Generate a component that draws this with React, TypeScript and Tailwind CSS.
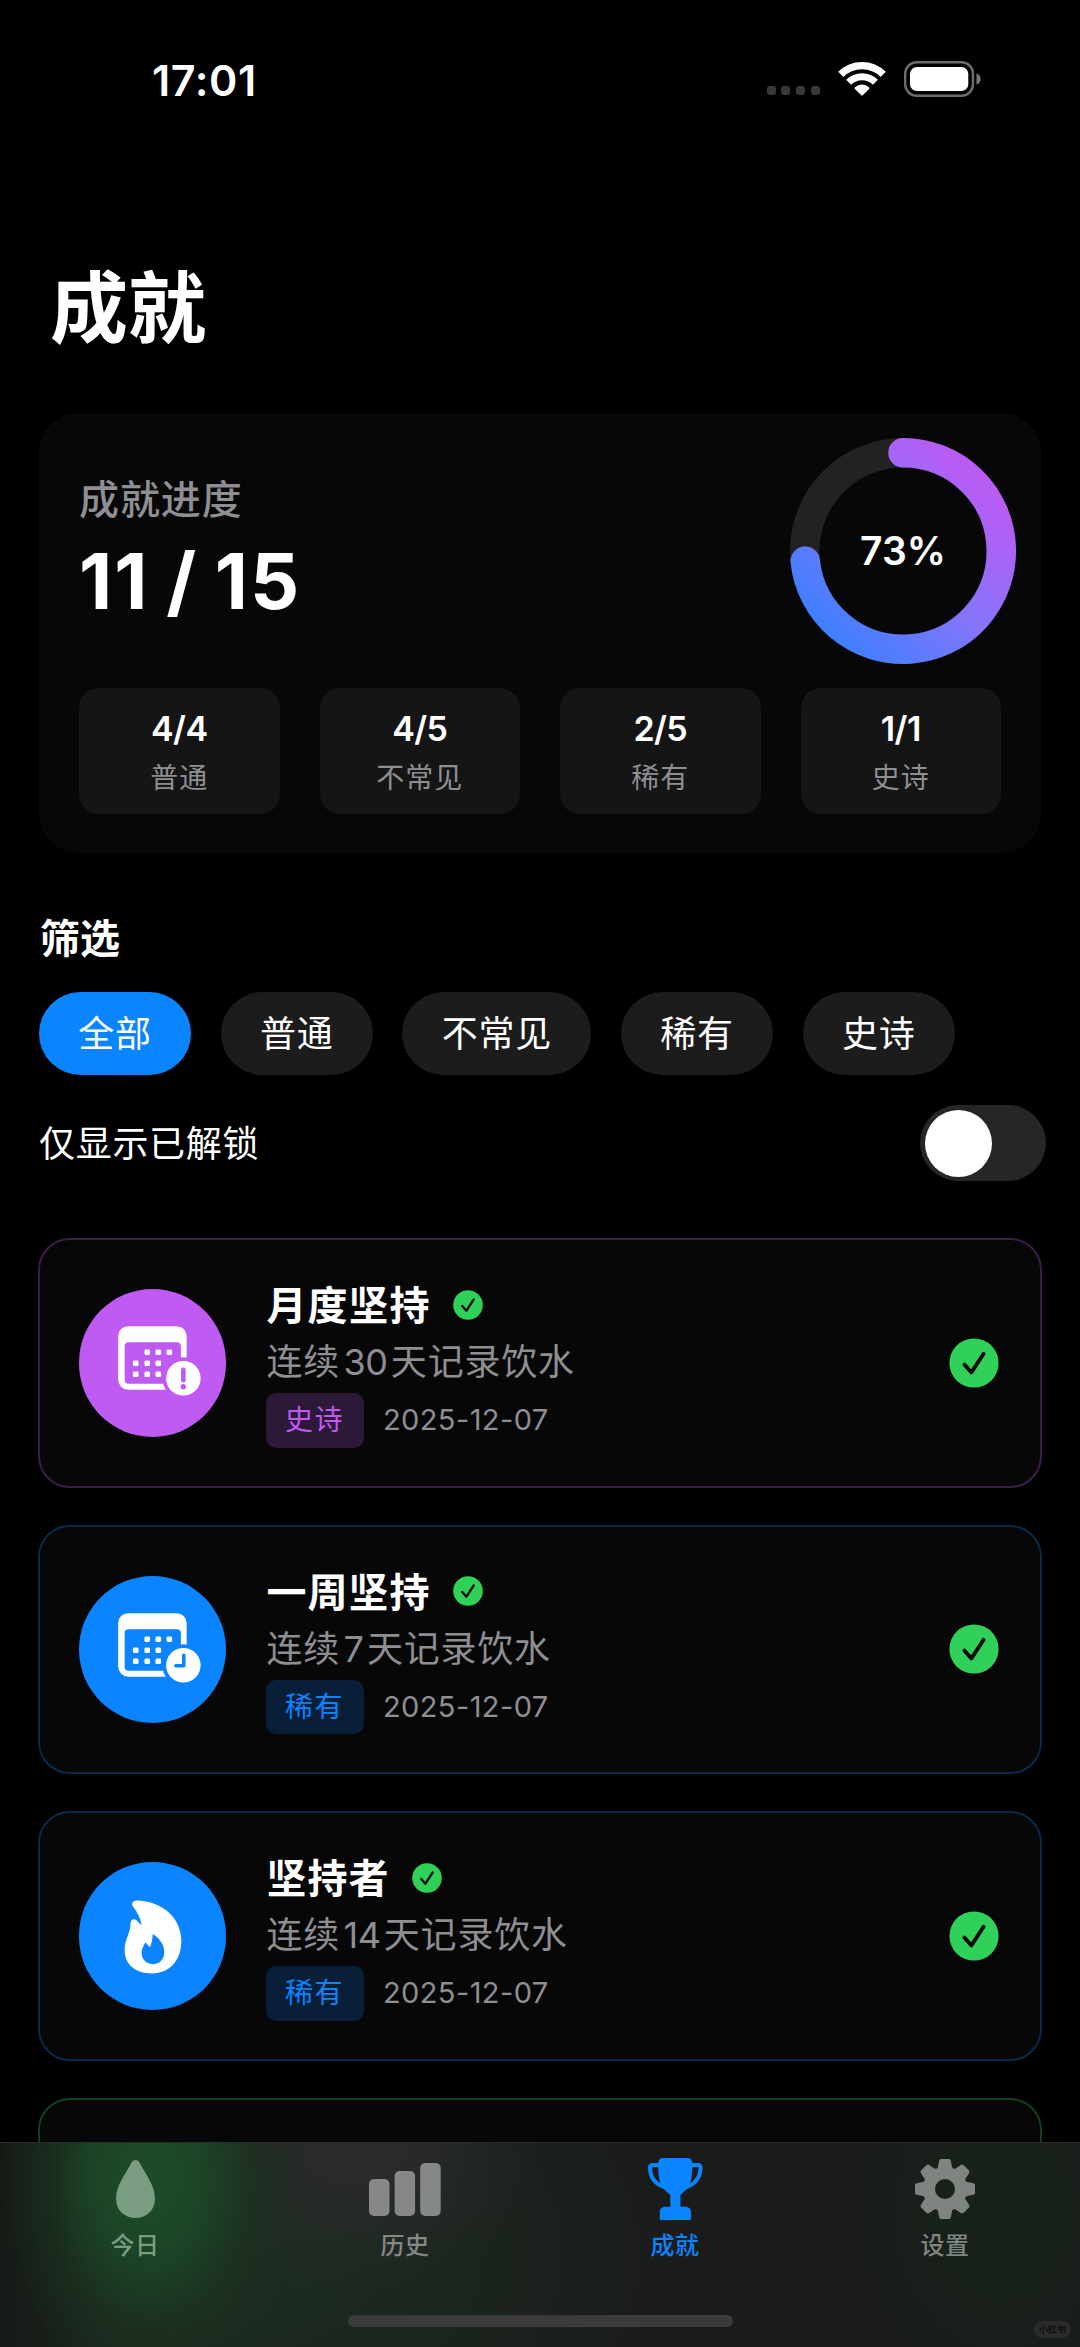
import type { ReactNode } from "react";
import clsx from "clsx";

type Rarity = "epic" | "rare" | "uncommon";

interface Achievement {
  title: string;
  days: string;
  rarity: Rarity;
  label: string;
  date: string;
  icon: ReactNode;
}

const rarityStyles: Record<Rarity, { border: string; circle: string; tag: string }> = {
  epic: { border: "border-[#3a1f49]", circle: "bg-[#bf5af2]", tag: "bg-[#2c1837] text-[#bf5af2]" },
  rare: { border: "border-[#082a4b]", circle: "bg-[#0a84ff]", tag: "bg-[#081f37] text-[#0a84ff]" },
  uncommon: { border: "border-[#123f1d]", circle: "bg-[#30d158]", tag: "bg-[#0e2d16] text-[#30d158]" },
};

function CalendarIcon({ id, children }: { id: string; children: ReactNode }) {
  const dots = [
    [68, 63], [79, 63], [90, 63],
    [56.5, 74], [68, 74], [79, 74],
    [56.5, 85], [68, 85], [79, 85],
  ];
  return (
    <svg viewBox="0 0 147 147" className="w-full h-full">
      <mask id={id}>
        <rect width="147" height="147" fill="white" />
        <rect x="45.5" y="53" width="56" height="41.5" rx="4" fill="black" />
        <circle cx="104" cy="89" r="21" fill="black" />
      </mask>
      <rect x="39" y="37" width="68.3" height="63.3" rx="10" fill="white" mask={`url(#${id})`} />
      {dots.map(([x, y]) => (
        <rect key={`${x}-${y}`} x={x - 2.8} y={y - 2.8} width="5.6" height="5.6" rx="1.4" fill="white" />
      ))}
      <circle cx="104" cy="89" r="17.2" fill="white" />
      {children}
    </svg>
  );
}

function FlameIcon() {
  return (
    <svg viewBox="0 0 147 147" className="w-full h-full">
      <path
        fill="white"
        fillRule="evenodd"
        d="M57.5 38.3C53.5 38.3 51.8 41.5 53.8 44.3C58 50 61.5 55.5 62.2 63C60.5 61.5 59 59.8 57.6 58.4C54.8 55.8 51.6 57 51.4 61C51.2 72 45.5 76 45.5 88C45.5 102 56 111 72.5 111C91 111 102 97.5 102 78.5C102 56.5 84 38.8 57.5 38.3ZM73.4 71.8C80.5 76 85 82.5 85 90C85 97 80.5 101.8 73.8 101.8C67 101.8 62.4 97 62.4 90.5C62.4 86 64.5 83.5 66.3 80C67.8 82 69.3 84 70.9 84.8C72.6 80.5 73.4 76 73.4 71.8Z"
      />
    </svg>
  );
}

function CheckBadge({ size }: { size: "sm" | "lg" }) {
  return (
    <svg viewBox="0 0 50 50" className={size === "sm" ? "w-[30px] h-[30px]" : "w-[50px] h-[50px]"}>
      <circle cx="25" cy="25" r="24.6" fill="#30d158" />
      <path d="M15.4 26.6L22.4 34.4L34.6 15.8" fill="none" stroke="#060606" strokeWidth="3.8" strokeLinecap="round" strokeLinejoin="round" />
    </svg>
  );
}

function StatusBar() {
  return (
    <header className="flex h-[160px] shrink-0 items-center justify-between pl-[152px] pr-[99px]">
      <span className="text-[43px] font-semibold leading-none tracking-[0.6px]">17:01</span>
      <div className="mb-[3px] flex items-center">
        <div className="mt-[24px] mr-[18px] flex gap-[5.8px]">
          {[0, 1, 2, 3].map((i) => (
            <span key={i} className="h-[9px] w-[9px] rounded-[3px] bg-[#383838]" />
          ))}
        </div>
        <svg viewBox="0 0 48 35" className="mr-[18px] h-[35px] w-[48px]" fill="none" stroke="white">
          <path d="M2.8 13.4A30 30 0 0 1 45.2 13.4" strokeWidth="7.4" />
          <path d="M10.6 21.2A19 19 0 0 1 37.4 21.2" strokeWidth="7" />
          <path d="M24 33.6L17.6 27.2A9 9 0 0 1 30.4 27.2Z" fill="white" strokeWidth="2" strokeLinejoin="round" />
        </svg>
        <svg viewBox="0 0 77 36" className="h-[36px] w-[77px]">
          <rect x="1.2" y="1.2" width="67.8" height="33.6" rx="11.5" fill="none" stroke="#6c6c6c" strokeWidth="2.4" />
          <rect x="6" y="6" width="58.3" height="24" rx="7" fill="white" />
          <path d="M72.5 12.4C75.3 13.2 76.6 15.4 76.6 18C76.6 20.6 75.3 22.8 72.5 23.6Z" fill="#7a7a7a" />
        </svg>
      </div>
    </header>
  );
}

function ProgressRing() {
  return (
    <div className="relative h-[196px] w-[196px]">
      <svg viewBox="-98 -98 196 196" className="h-full w-full overflow-visible">
        <defs>
          <linearGradient id="ring" gradientUnits="userSpaceOnUse" x1="-80" y1="80" x2="80" y2="-80">
            <stop offset="0" stopColor="#3d80ff" />
            <stop offset="0.5" stopColor="#8674fb" />
            <stop offset="1" stopColor="#bd5af3" />
          </linearGradient>
        </defs>
        <circle r="98.3" fill="none" stroke="#222222" strokeWidth="29.5" />
        <path d="M0 -98.3A98.3 98.3 0 1 1 -97.76 10.28" fill="none" stroke="url(#ring)" strokeWidth="29.5" strokeLinecap="round" />
      </svg>
      <span className="absolute inset-0 flex items-center justify-center text-[39px] font-semibold">73%</span>
    </div>
  );
}

const stats = [
  { value: "4/4", label: "普通" },
  { value: "4/5", label: "不常见" },
  { value: "2/5", label: "稀有" },
  { value: "1/1", label: "史诗" },
];

function SummaryCard() {
  return (
    <section className="mt-[57px] flex h-[440px] shrink-0 flex-col rounded-[39px] bg-[#070707] px-[40px] pt-[40px]">
      <div className="flex h-[196px] items-center justify-between">
        <div className="flex flex-col gap-[9px]">
          <span className="text-[40px] font-medium leading-[50px] tracking-[0.9px] text-[#8e8e93]">成就进度</span>
          <span className="text-[77px] font-bold leading-[94px] tracking-[2px] [word-spacing:-3.5px]">11 / 15</span>
        </div>
        <ProgressRing />
      </div>
      <div className="mt-[39px] grid grid-cols-4 gap-[40px]">
        {stats.map((s) => (
          <div key={s.label} className="flex h-[126px] flex-col items-center rounded-[20px] bg-[#151515] pt-[20px]">
            <span className="text-[34px] font-semibold leading-[42px] tracking-[-0.6px]">{s.value}</span>
            <span className="mt-[10px] text-[28px] leading-[36px] tracking-[1px] text-[#8e8e93]">{s.label}</span>
          </div>
        ))}
      </div>
    </section>
  );
}

const filters = ["全部", "普通", "不常见", "稀有", "史诗"];

function Filters() {
  return (
    <section className="mt-[61px] shrink-0">
      <h2 className="pl-px text-[40px] font-semibold leading-[50px]">筛选</h2>
      <div className="mt-[28px] flex gap-[29.5px]">
        {filters.map((f, i) => (
          <button
            key={f}
            className={clsx(
              "h-[83px] rounded-full px-[39.3px] text-[36px] leading-[85px] tracking-[0.8px]",
              i === 0 ? "bg-[#0a84ff]" : "bg-[#1c1c1c]"
            )}
          >
            {f}
          </button>
        ))}
      </div>
      <div className="mt-[30px] flex h-[76px] items-center justify-between">
        <span className="pt-[2px] text-[36px] tracking-[0.7px]">仅显示已解锁</span>
        <div className="-mr-[5px] flex h-[76px] w-[126px] items-center rounded-full bg-[#262628] pl-[5px]">
          <div className="h-[67px] w-[67px] rounded-full bg-white" />
        </div>
      </div>
    </section>
  );
}

const achievements: Achievement[] = [
  {
    title: "月度坚持",
    days: "30",
    rarity: "epic",
    label: "史诗",
    date: "2025-12-07",
    icon: (
      <CalendarIcon id="cal-month">
        <path d="M104 80.6V91" stroke="#bf5af2" strokeWidth="4.6" strokeLinecap="round" />
        <circle cx="104" cy="97.4" r="2.7" fill="#bf5af2" />
      </CalendarIcon>
    ),
  },
  {
    title: "一周坚持",
    days: "7",
    rarity: "rare",
    label: "稀有",
    date: "2025-12-07",
    icon: (
      <CalendarIcon id="cal-week">
        <path d="M104.4 79V89.5H96.5" fill="none" stroke="#0a84ff" strokeWidth="3.6" strokeLinecap="round" strokeLinejoin="round" />
      </CalendarIcon>
    ),
  },
  {
    title: "坚持者",
    days: "14",
    rarity: "rare",
    label: "稀有",
    date: "2025-12-07",
    icon: <FlameIcon />,
  },
];

function AchievementCard({ item }: { item: Achievement }) {
  const style = rarityStyles[item.rarity];
  return (
    <article
      className={clsx(
        "flex h-[249.5px] shrink-0 items-center rounded-[32px] border-2 bg-[#070707] pl-[38.5px] pr-[41.5px]",
        style.border
      )}
    >
      <div className={clsx("h-[147.5px] w-[147.5px] shrink-0 rounded-full", style.circle)}>{item.icon}</div>
      <div className="ml-[39.5px] flex flex-1 flex-col">
        <div className="flex items-center">
          <h3 className="pl-px text-[40px] font-semibold leading-[56px] tracking-[1px]">{item.title}</h3>
          <span className="mb-[3px] ml-[22.5px]">
            <CheckBadge size="sm" />
          </span>
        </div>
        <p className="flex pl-px text-[36px] leading-[56px] tracking-[0.8px] text-[#8e8e93]">
          连续<span className="mx-[3.5px] tracking-[-0.6px]">{item.days}</span>天记录饮水
        </p>
        <div className="mt-[3px] flex items-center gap-[19.5px]">
          <span className={clsx("h-[54.5px] rounded-[10px] px-[19.6px] text-[28px] leading-[54px] tracking-[1.4px]", style.tag)}>
            {item.label}
          </span>
          <span className="text-[29px] leading-[54px] tracking-[0.4px] text-[#8e8e93]">{item.date}</span>
        </div>
      </div>
      <CheckBadge size="lg" />
    </article>
  );
}

function DropIcon() {
  return (
    <svg viewBox="0 0 39 58" className="h-[58px] w-[39px]" fill="currentColor">
      <path d="M19.5 0C17.6 0 16.2 1 15.2 3C9.5 14.5 0 25.5 0 38.5C0 50 8 58 19.5 58C31 58 39 50 39 38.5C39 25.5 29.5 14.5 23.8 3C22.8 1 21.4 0 19.5 0Z" />
    </svg>
  );
}

function BarsIcon() {
  return (
    <svg viewBox="0 0 72 53" className="h-[53px] w-[72px]" fill="currentColor">
      <rect x="0" y="16" width="20.5" height="37" rx="5" />
      <rect x="25.6" y="8" width="20.5" height="45" rx="5" />
      <rect x="51.2" y="0" width="20.5" height="53" rx="5" />
    </svg>
  );
}

function TrophyIcon() {
  return (
    <svg viewBox="0 0 55 62" className="h-[62px] w-[55px]" fill="currentColor">
      <path
        fillRule="evenodd"
        d="M15 0H39.5C42.5 0 44.2 2 44.4 5H50C53 5 54.5 6.6 54.5 9.5C54.5 21 48.5 27.5 39 31L32.4 37V48.7H37.5C41 48.7 43 51 43 54V60.5C43 61.5 42.4 62 41.5 62H13.3C12.4 62 11.8 61.5 11.8 60.5V54C11.8 51 13.8 48.7 17.3 48.7H22.3V37L15.7 31C6 27.5 0 21 0 9.5C0 6.6 1.6 5 4.6 5H10.2C10.4 2 12 0 15 0ZM4 9.2C4 16 7 22 12.4 25.2C10.9 21 10.3 15 10.2 9.2ZM50.6 9.2H44.4C44.2 15 43.7 21 42.2 25.2C47.6 22 50.6 16 50.6 9.2Z"
      />
    </svg>
  );
}

function GearIcon() {
  return (
    <svg viewBox="-30 -30 60 60" className="h-[60px] w-[60px]" fill="currentColor">
      <circle r="15.5" fill="none" stroke="currentColor" strokeWidth="11" />
      {[0, 45, 90, 135, 180, 225, 270, 315].map((deg) => (
        <path
          key={deg}
          transform={`rotate(${deg})`}
          d="M-3.6 -30H3.6C4.8 -30 5.5 -29.4 5.8 -28.2L7.2 -21.5L10.4 -18.2L5 -14H-5L-10.4 -18.2L-7.2 -21.5L-5.8 -28.2C-5.5 -29.4 -4.8 -30 -3.6 -30Z"
        />
      ))}
    </svg>
  );
}

const tabs = [
  { label: "今日", icon: <DropIcon />, color: "text-[#7a9c81]" },
  { label: "历史", icon: <BarsIcon />, color: "text-[#868886]" },
  { label: "成就", icon: <TrophyIcon />, color: "text-[#0a84ff]" },
  { label: "设置", icon: <GearIcon />, color: "text-[#7e847f]" },
];

function TabBar() {
  return (
    <nav className="relative h-[205px] shrink-0 overflow-hidden border-t border-[#2c2c2c] bg-[#1a1b1a]">
      {/* content colours bleeding through the bar */}
      <div className="absolute inset-0 bg-[radial-gradient(ellipse_190px_150px_at_355px_0px,#2b2b2b_15%,transparent),radial-gradient(ellipse_170px_220px_at_1000px_70px,#17231a,transparent),radial-gradient(ellipse_480px_300px_at_210px_110px,#1c2b20_20%,transparent)]" />
      <div className="absolute inset-0 bg-[linear-gradient(to_right,#151a16,transparent_110px)]" />
      <div className="absolute inset-0 bg-[radial-gradient(ellipse_150px_215px_at_150px_35px,#1d4a28_15%,#1c4225_40%,#1b342180_70%,transparent)]" />
      <div className="relative grid grid-cols-4">
        {tabs.map((tab) => (
          <div key={tab.label} className={clsx("flex flex-col items-center pt-[15px]", tab.color)}>
            <div className="flex h-[62px] items-center">{tab.icon}</div>
            <span className="mt-[11px] text-[24px] font-medium leading-[30px] tracking-[0.5px]">{tab.label}</span>
          </div>
        ))}
      </div>
      <div className="absolute bottom-[20px] left-[348px] h-[12px] w-[385px] rounded-full bg-[#3b3b3b]" />
      <span className="absolute bottom-[9px] right-[9px] flex h-[17px] w-[37px] items-center justify-center rounded-full bg-[#2a2b2a] text-[9px] font-bold text-[#0f0f0f]">
        小红书
      </span>
    </nav>
  );
}

export default function App() {
  return (
    <div className="flex h-[2347px] w-[1080px] flex-col overflow-hidden bg-black font-['Inter','Noto_Sans_CJK_SC',sans-serif] text-white">
      <StatusBar />
      <main className="flex min-h-0 flex-1 flex-col overflow-hidden px-[39px]">
        <h1 className="mt-[96px] h-[100px] shrink-0 pl-[11px] text-[78px] font-bold leading-[106px]">成就</h1>
        <SummaryCard />
        <Filters />
        <div className="-mx-px mt-[57px] flex flex-col gap-[37px]">
          {achievements.map((a) => (
            <AchievementCard key={a.title} item={a} />
          ))}
          <div className={clsx("h-[249.5px] shrink-0 rounded-[32px] border-2 bg-[#070707]", rarityStyles.uncommon.border)} />
        </div>
      </main>
      <TabBar />
    </div>
  );
}
